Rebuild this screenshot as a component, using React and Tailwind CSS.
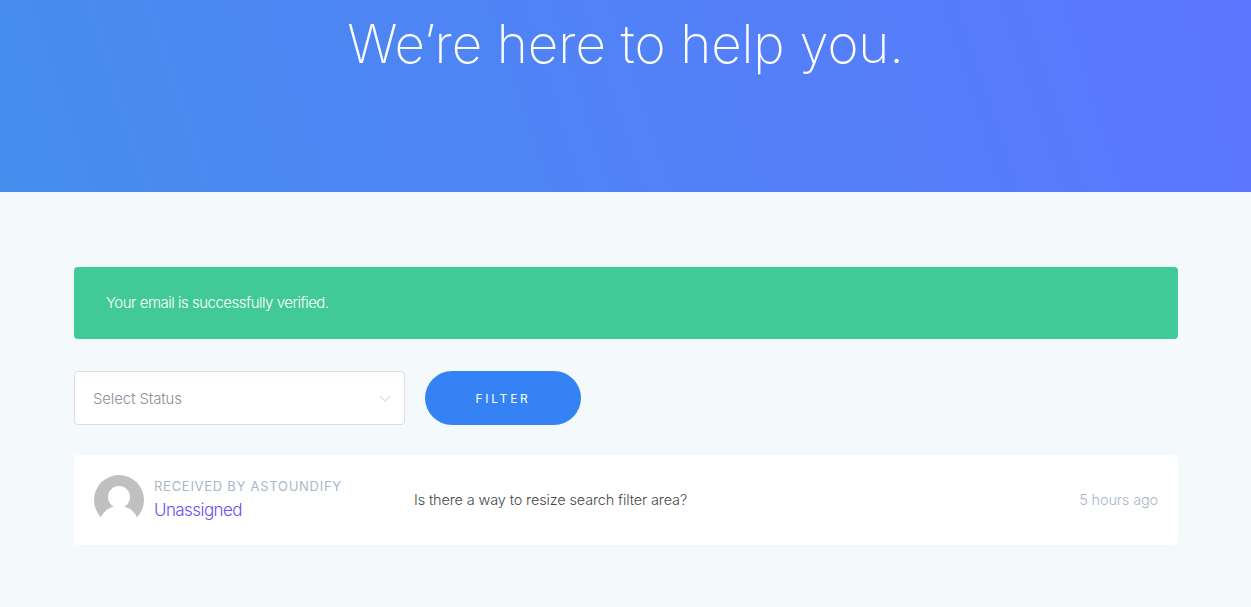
import React from "react";

export default function App() {
  return (
    <div className="min-h-[607px] bg-[#f4f9fc] font-['Inter','Noto_Sans',sans-serif]">
      <header className="h-[192px] bg-[linear-gradient(72deg,#468dee,#5c77ff)] flex justify-center overflow-hidden">
        <h1 className="text-[53px] leading-[88px] font-extralight text-white tracking-[-0.002em]">We’re here to help you.</h1>
      </header>
      <main className="pl-[74px] pr-[73px] pt-[75px] pb-[62px]">
        <div className="h-[72px] rounded bg-[#41c997] text-white text-[15px] tracking-[-0.033em] font-light flex items-center px-8">
          Your email is successfully verified.
        </div>
        <div className="flex gap-5 mt-8">
          <div className="w-[331px] h-[54px] bg-white border border-[#d8dde6] rounded flex items-center justify-between pl-[18px] pr-[13px]">
            <span className="text-[15px] text-[#8b8f96] font-light tracking-[-0.01em] pt-[2px]">Select Status</span>
            <svg width="12" height="8" viewBox="0 0 12 8" fill="none" stroke="#dfe5ee" strokeWidth="1.5" className="mt-[2px]"><path d="M1 1l5 5 5-5" /></svg>
          </div>
          <button className="w-[156px] h-[54px] rounded-full bg-[#3582f5] text-white text-[12px] tracking-[0.23em] font-normal pt-[2px]">FILTER</button>
        </div>
        <div className="mt-[30px] h-[90px] bg-white rounded flex items-center pl-5 pr-5">
          <svg viewBox="0 0 50 50" width="50" height="50" className="shrink-0">
            <circle cx="25" cy="25" r="25" fill="#c0c0c0" />
            <circle cx="25" cy="22" r="11" fill="#fff" />
            <ellipse cx="25" cy="48" rx="19" ry="17" fill="#fff" />
          </svg>
          <div className="ml-[10px] w-[260px] shrink-0">
            <div className="text-[13px] leading-[20px] tracking-[0.056em] text-[#a9b7c9] font-normal -mt-[2px]">RECEIVED BY ASTOUNDIFY</div>
            <div className="text-[17px] leading-[24px] text-[#6d4df5] font-light tracking-[-0.034em] mt-[2px]">Unassigned</div>
          </div>
          <div className="flex-1 text-[14.5px] text-[#4a4a4a] font-light tracking-[-0.01em] -mt-[1px]">Is there a way to resize search filter area?</div>
          <div className="text-[14.5px] text-[#a9b7c9] font-light tracking-[-0.01em] -mt-[1px]">5 hours ago</div>
        </div>
      </main>
    </div>
  );
}
